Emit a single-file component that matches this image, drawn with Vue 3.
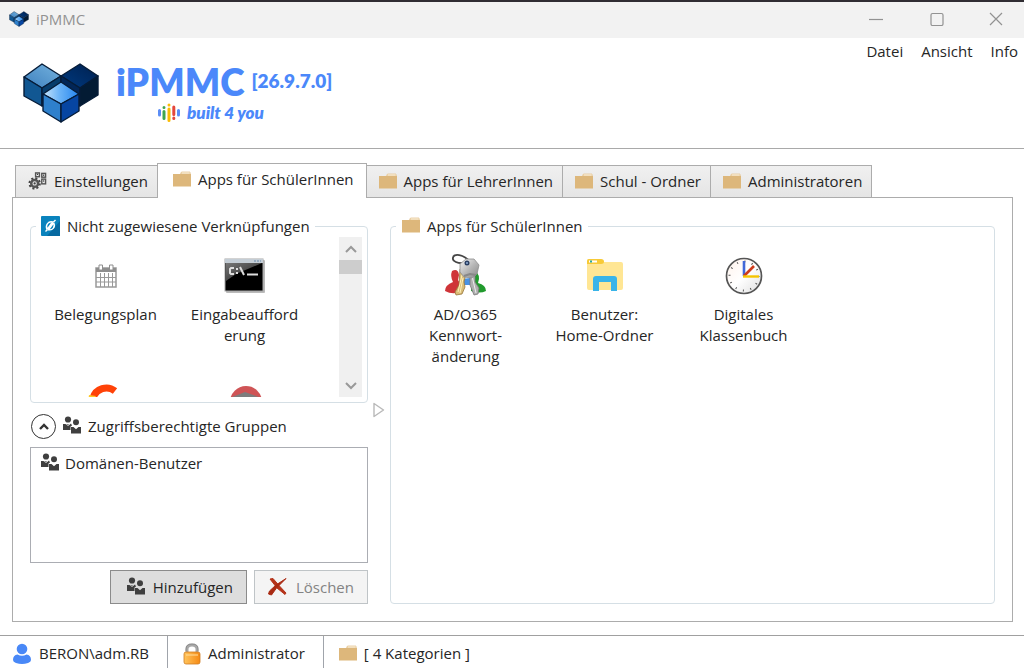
<script setup>
import { ref } from 'vue'

const tabs = [
  { label: 'Einstellungen', icon: 'gear' },
  { label: 'Apps für SchülerInnen', icon: 'folder' },
  { label: 'Apps für LehrerInnen', icon: 'folder' },
  { label: 'Schul - Ordner', icon: 'folder' },
  { label: 'Administratoren', icon: 'folder' }
]
const active = ref(1)
</script>

<template>
  <div class="window">
    <svg class="defs" width="0" height="0" aria-hidden="true">
      <defs>
        <linearGradient id="topLeft" x1="0" y1="1" x2="1" y2="0"><stop offset="0" stop-color="#3d7fbd" /><stop offset="1" stop-color="#75b3df" /></linearGradient>
        <linearGradient id="topRight" x1="0" y1="1" x2="1" y2="0"><stop offset="0" stop-color="#003a80" /><stop offset="1" stop-color="#00204f" /></linearGradient>
        <linearGradient id="topFront" x1="0" y1="0" x2="1" y2="0"><stop offset="0" stop-color="#c8e4fa" /><stop offset="0.45" stop-color="#6cb4f7" /><stop offset="1" stop-color="#2484ee" /></linearGradient>
        <linearGradient id="metal" x1="0" y1="0" x2="1" y2="1"><stop offset="0" stop-color="#f4f4f4" /><stop offset="0.5" stop-color="#b8b8b8" /><stop offset="1" stop-color="#888888" /></linearGradient>
        <linearGradient id="gold" x1="0" y1="0" x2="1" y2="0"><stop offset="0" stop-color="#ffc45c" /><stop offset="1" stop-color="#f68a14" /></linearGradient>
        <linearGradient id="face" x1="0" y1="0" x2="1" y2="1"><stop offset="0" stop-color="#fff3ec" /><stop offset="0.5" stop-color="#ffffff" /><stop offset="1" stop-color="#dedede" /></linearGradient>
        <linearGradient id="shine" x1="0" y1="0" x2="1" y2="1"><stop offset="0" stop-color="#777777" /><stop offset="1" stop-color="#1c1c1c" /></linearGradient>
      </defs>
      <symbol id="cubes" viewBox="0 0 78 62">
        <g stroke="#061c38" stroke-width="1.4" stroke-linejoin="round">
          <path d="M20 2 39 14 20 26 2 15Z" fill="url(#topLeft)" /><path d="M2 15 20 26V44L2 34Z" fill="#115792" /><path d="M20 26 39 14V34L20 44Z" fill="#073c6b" />
          <path d="M58 2 76 14 58 26 39 14Z" fill="url(#topRight)" /><path d="M39 14 58 26V44L39 34Z" fill="#022657" /><path d="M58 26 76 14V33L58 44Z" fill="#031b34" />
          <path d="M39 20 57 32 39 42 21 32Z" fill="url(#topFront)" /><path d="M21 32 39 42V60L21 49Z" fill="#2e80cc" /><path d="M39 42 57 32V49L39 60Z" fill="#0645a2" />
        </g>
      </symbol>
      <symbol id="folder" viewBox="0 0 18 16">
        <path d="M7 4.5 8.5 1H17v4z" fill="#f4e4c8" stroke="#e4c595" stroke-width=".8" />
        <path d="M0 3h7.500L9 2.800H18V15.500H0Z" fill="#ddb77b" />
        <path d="M8 1H17v2H7.500Z" fill="#ead0a5" /><path d="M9 2H16.500" stroke="#fff6e6" stroke-width=".8" />
      </symbol>
      <symbol id="people" viewBox="0 0 18 18">
        <g fill="#3f3f3f"><circle cx="5" cy="3.500" r="3.100" /><circle cx="13" cy="6.200" r="3" />
          <path d="M0 8H2.500L5 10 8 7.500 9 9.500 7.500 10.500V14H0ZM8 11H10.500L13 13.200 15.500 11H18V17.500H8Z" /></g>
        <path d="M3 8H6L5 10Z" fill="#888" />
      </symbol>
      <symbol id="gear" viewBox="0 0 20 20">
        <circle cx="7" cy="12.500" r="3.600" fill="none" stroke="#555" stroke-width="2.600" />
        <circle cx="7" cy="12.500" r="5.500" fill="none" stroke="#444" stroke-width="2" stroke-dasharray="2.200 2.120" />
        <circle cx="7" cy="12.500" r="1.200" fill="#444" />
        <g fill="none" stroke="#555" stroke-width="1.500"><rect x="8" y="1.500" width="4" height="4" /><rect x="14.500" y="2" width="4" height="4" /><rect x="14.500" y="8" width="4" height="5" /></g>
        <path d="M9.500 3h1M16 4h1M16 10h1" stroke="#333" stroke-width="1.500" />
      </symbol>
    </svg>

    <header class="titlebar">
      <svg class="mini"><use href="#cubes" /></svg>
      <span class="caption">iPMMC</span>
      <button class="win" aria-label="Minimieren"><svg width="14" height="14"><path d="M0 7.500H14" /></svg></button>
      <button class="win" aria-label="Maximieren"><svg width="14" height="14"><rect x="1" y="1.500" width="12" height="12" rx="1.500" /></svg></button>
      <button class="win" aria-label="Schließen"><svg width="14" height="14"><path d="M1 1 13 13M13 1 1 13" /></svg></button>
    </header>

    <section class="banner">
      <svg class="logo"><use href="#cubes" /></svg>
      <div class="brand">
        <div class="name"><h1>iPMMC</h1><span class="version">[26.9.7.0]</span></div>
        <div class="slogan">
          <svg width="22" height="20" viewBox="0 0 22 20" fill="none" stroke-width="3" stroke-linecap="round">
            <path d="M1.500 7.500V12M20.500 7.500V12" stroke="#5b8df6" /><path d="M6 8.500V15.500M6 4.500V4.600" stroke="#3fa650" />
            <path d="M11 6V17.500M11 2V2.100" stroke="#fbbc05" /><path d="M15.800 4V11.500M15.800 15V15.400" stroke="#e5473b" />
          </svg>
          <span>built 4 you</span>
        </div>
      </div>
      <nav class="menu"><button>Datei</button><button>Ansicht</button><button>Info</button></nav>
    </section>

    <main class="main">
      <div class="tabs" role="tablist">
        <button v-for="(t, i) in tabs" :key="t.label" role="tab" :aria-selected="i === active" :class="['tab', { on: i === active }]" @click="active = i">
          <svg :class="t.icon"><use :href="'#' + t.icon" /></svg>{{ t.label }}
        </button>
      </div>
      <div class="panel" role="tabpanel">
        <div class="left">
          <fieldset class="group">
            <legend>
              <svg width="19" height="20" viewBox="0 0 19 20"><rect width="19" height="20" rx="1" fill="#0a83bd" /><path d="M19 5V20H6Z" fill="#0669a0" />
                <g fill="none" stroke="#fff" stroke-width="1.400"><path d="M4.500 15.500 6.500 13.500M6 13.500C4 9 7.500 5 11.500 6L6.500 13M12.500 6.500C15 11 11.500 14.500 7.500 13.800L12.500 7M12.500 6 14.500 4" /></g></svg>
              Nicht zugewiesene Verknüpfungen
            </legend>
            <div class="scroller">
              <div class="items">
                <button class="item">
                  <span class="pic"><svg width="22" height="24" viewBox="0 0 22 24"><path d="M1 4H21V23H1Z" fill="#fff" stroke="#999" stroke-width="1.500" /><path d="M1 4H21V8H1Z" fill="#8e8e8e" /><path d="M1 13.500H21M1 18H21M5.500 9V23M9.500 9V23M13.500 9V23M17.500 9V23" stroke="#999" /><path d="M4 1H7.500V6H4ZM14.500 1H18V6H14.500Z" fill="#fff" stroke="#8e8e8e" /></svg></span>
                  <span>Belegungsplan</span>
                </button>
                <button class="item">
                  <span class="pic"><svg width="42" height="36" viewBox="0 0 42 36"><rect x="2" y="2" width="39" height="33" rx="1" fill="#bbb" /><rect x="1" y="1" width="38" height="32" fill="#000" stroke="#a8a8a8" /><path d="M2 5H38L12 16 2 23Z" fill="url(#shine)" /><path d="M1 1H39V5H1Z" fill="#c4cdd5" /><path d="M30 3H37" stroke="#6889aa" stroke-dasharray="2 1" />
                    <g fill="none" stroke="#ddd" stroke-width="2"><path d="M10 10H7L6 11V15L7 16H10M13 10V12M13 14V16M16 9 20 17M23 16.500H34" /></g></svg></span>
                  <span>Eingabeaufford<br>erung</span>
                </button>
                <button class="item" aria-label="Verknüpfung 3">
                  <span class="pic"><svg width="36" height="36" viewBox="0 0 36 36"><path d="M5 14A14 14 0 0 1 27 7" fill="none" stroke="#ff4208" stroke-width="7" /><path d="M1 11 8 12 5 17H0Z" fill="#ffc928" /></svg></span>
                </button>
                <button class="item" aria-label="Verknüpfung 4">
                  <span class="pic"><svg width="36" height="36" viewBox="0 0 36 36"><circle cx="19" cy="18" r="16" fill="#cf5456" /><path d="M0 15 18 8 37 15Z" fill="#7d7d7d" /></svg></span>
                </button>
              </div>
              <div class="bar">
                <button aria-label="Nach oben"><svg width="12" height="8"><path d="M1 7 6 2 11 7" /></svg></button>
                <span class="thumb"></span>
                <button class="down" aria-label="Nach unten"><svg width="12" height="8"><path d="M1 1 6 6 11 1" /></svg></button>
              </div>
            </div>
          </fieldset>
          <div class="expander">
            <button class="round" aria-label="Einklappen"><svg width="12" height="8"><path d="M2 6 6 2 10 6" /></svg></button>
            <svg class="people"><use href="#people" /></svg>
            <span>Zugriffsberechtigte Gruppen</span>
          </div>
          <ul class="list">
            <li><svg class="people"><use href="#people" /></svg>Domänen-Benutzer</li>
          </ul>
          <div class="actions">
            <button class="action"><svg class="people"><use href="#people" /></svg>Hinzufügen</button>
            <button class="action off" disabled>
              <svg width="20" height="18" viewBox="0 0 20 18"><path d="M2 1 5 .5 11 7.500 18 15 17 16.500 9 10Z" fill="#b5341b" stroke="#b5341b" /><path d="M18 .5 8.500 10 3.500 17 .5 16 1.500 13 8 7Z" fill="#a92a13" stroke="#a92a13" /></svg>Löschen
            </button>
          </div>
        </div>
        <div class="splitter"><svg width="12" height="16"><path d="M1 1.500V14.500L10.500 8Z" fill="#fff" stroke="#b9b9b9" stroke-width="1.400" stroke-linejoin="round" /></svg></div>
        <fieldset class="group right">
          <legend><svg class="folder"><use href="#folder" /></svg>Apps für SchülerInnen</legend>
          <div class="items">
            <button class="item">
              <span class="pic"><svg width="44" height="44" viewBox="0 0 44 44">
                <path d="M8 17Q14 14 15 21L14 26 17 31V38Q8 41 1 37 1 31 9 28 6 22 8 17Z" fill="#cf3438" />
                <path d="M28 17Q35 17 35 25L34 29Q42 31 42 37 36 40 27 37Z" fill="#219a2d" />
                <path d="M18 25 26 24 29 31 17 31Z" fill="#4992e4" />
                <path d="M26 8C20 0 9-1 9 4 8 7 14 10 20 9" fill="none" stroke="#454545" stroke-width="1.800" />
                <path d="M16 15 22 19 20 28 21 33 18 40 12 41 11 38 15 31Z" fill="#d9bd78" stroke="#98763b" stroke-width=".8" /><path d="M18 21 14 38M19 24 16 39" stroke="#fff0b9" />
                <path d="M26 20 31 21 31 28 35 34 34 40 30 41 26 31Z" fill="#b0b0b0" stroke="#777" stroke-width=".8" /><path d="M28 22 32 39" stroke="#eee" />
                <path d="M16 10 22 5 30 5 35 11 33 20 28 24 20 23 16 18Z" fill="url(#metal)" stroke="#8d8d8d" stroke-width=".8" /><path d="M20 22 26 20 32 21" fill="none" stroke="#888" stroke-width="2" />
                <circle cx="23" cy="9" r="2.500" fill="#293e62" /><circle cx="23" cy="9" r="1" fill="#8faed5" /></svg></span>
              <span>AD/O365<br>Kennwort-<br>änderung</span>
            </button>
            <button class="item">
              <span class="pic"><svg width="38" height="34" viewBox="0 0 38 34"><path d="M1 2Q1 0 3 0H15L18 3H35Q37 3 37 5V29Q37 31 35 31H3Q1 31 1 29Z" fill="#ffe694" /><path d="M1 5V2Q1 0 3 0H15Q18 0 18 2.500T15 5Z" fill="#f7ca37" /><rect x="3" y="1.500" width="8" height="2" fill="#fff" /><rect x="4" y="1.500" width="2" height="2" fill="#27a8a0" /><path d="M7 32V20Q7 17 10 17H28Q31 17 31 20V32H25V23H13V32Z" fill="#39b4e8" /></svg></span>
              <span>Benutzer:<br>Home-Ordner</span>
            </button>
            <button class="item">
              <span class="pic"><svg width="38" height="38" viewBox="0 0 38 38"><circle cx="19" cy="19" r="17.500" fill="url(#face)" stroke="#555" stroke-width="1.700" /><circle cx="19" cy="19" r="14.500" fill="none" stroke="#555" stroke-width="2" stroke-dasharray="1 6.592" /><path d="M19 19V4" stroke="#4268d8" stroke-width="2.600" /><path d="M19 19 29 9" stroke="#cf3c1b" stroke-width="2.600" /><path d="M18 19.500H34" stroke="#f5c400" stroke-width="2.400" /></svg></span>
              <span>Digitales<br>Klassenbuch</span>
            </button>
          </div>
        </fieldset>
      </div>
    </main>

    <footer class="status">
      <div class="cell user"><svg width="18" height="22" viewBox="0 0 18 22" fill="#4988f7"><circle cx="9" cy="6" r="5.300" /><path d="M0 17Q0 12 4.500 11.500 9 14 13.500 11.500 18 12 18 17 18 19 15 20 9 22 3 20 0 19 0 17Z" /></svg>BERON\adm.RB</div>
      <div class="cell"><svg width="18" height="22" viewBox="0 0 18 22"><path d="M4 10V6Q4 2 9 2T14 6V10" fill="none" stroke="#a8a8a8" stroke-width="3" /><path d="M3 8V6Q3 1 9 1T15 6V8" fill="none" stroke="#777" stroke-width=".6" /><rect x="1" y="9" width="16" height="12" rx="2" fill="url(#gold)" stroke="#cf7c21" stroke-width=".8" /><path d="M3 12H15" stroke="#ffe0a1" /></svg>Administrator</div>
      <div class="cell cats"><svg class="folder"><use href="#folder" /></svg>[ 4 Kategorien ]</div>
    </footer>
  </div>
</template>

<style>
body { margin: 0; }
</style>

<style scoped>
* { box-sizing: border-box; }
.window { display: flex; flex-direction: column; min-height: 100vh; background: #fff; color: #262626; font: 15px/21px "Open Sans", "Noto Sans", sans-serif; }
.defs { position: absolute; }
svg { flex: none; display: block; }
button { font: inherit; color: inherit; border: 0; padding: 0; background: none; }
.titlebar { display: flex; align-items: center; height: 38px; padding: 0 0 2px 9px; border-top: 2px solid #302d33; background: #f2f2f2; color: #929292; }
.mini { width: 20px; height: 16px; }
.caption { flex: 1; margin-left: 7px; }
.win { width: 61px; height: 34px; display: flex; align-items: center; justify-content: center; }
.win:last-child { width: 57px; }
.win svg { fill: none; stroke: #929292; stroke-width: 1.2; }
.banner { display: flex; align-items: flex-start; height: 111px; padding-left: 22px; border-bottom: 1px solid #a9a9a9; }
.logo { width: 78px; height: 62px; margin-top: 24px; }
.brand { flex: 1; margin: 21px 0 0 16px; color: #4b88fa; font-family: Lato, sans-serif; font-weight: 800; }
.name { display: flex; gap: 7px; }
h1 { margin: 0; font-size: 37px; line-height: 46px; font-weight: inherit; }
.version { font-size: 19px; line-height: 44px; }
.slogan { display: flex; align-items: center; gap: 7px; margin: -2px 0 0 42px; font-size: 17px; line-height: 20px; font-style: italic; }
.menu { display: flex; gap: 18px; margin: 3px 6px 0 0; }
.main { flex: 1; display: flex; flex-direction: column; padding: 14px 11px 13px 12px; }
.tabs { display: flex; align-items: flex-end; padding-left: 3px; }
.tab { display: flex; align-items: center; gap: 7px; height: 32px; padding: 0 9px 0 12px; margin-right: -1px; border: 1px solid #acacac; border-bottom: 0; background: linear-gradient(#f0f0f0, #e5e5e5); white-space: nowrap; }
.tab.on { position: relative; height: 35px; margin-bottom: -1px; padding: 0 12px 3px 15px; background: #fff; }
.gear { width: 19px; height: 20px; margin-bottom: 2px; }
.folder { width: 18px; height: 16px; margin-bottom: 2px; }
.people { width: 18px; height: 18px; margin-bottom: 3px; }
.panel { flex: 1; display: flex; padding: 17px; border: 1px solid #acacac; }
.left { width: 338px; display: flex; flex-direction: column; }
.group { margin: 0; min-width: 0; padding: 0 5px 5px; border: 1px solid #d5dfe5; border-radius: 4px; }
legend { display: flex; align-items: center; gap: 7px; height: 22px; padding: 0 5px; }
.scroller { display: flex; height: 160px; overflow: hidden; }
.items { flex: 1; display: flex; flex-wrap: wrap; align-content: flex-start; padding-top: 21px; }
.item { width: 139px; min-height: 126px; display: flex; flex-direction: column; align-items: center; justify-content: flex-start; }
.pic { display: flex; align-items: center; justify-content: center; height: 36px; margin-bottom: 10px; }
.bar { width: 23px; display: flex; flex-direction: column; background: #f0f0f0; }
.bar button { height: 23px; display: flex; align-items: center; justify-content: center; }
.bar .down { margin-top: auto; }
.bar svg { fill: none; stroke: #999; stroke-width: 2; }
.thumb { height: 14px; background: #cdcdcd; }
.expander { display: flex; align-items: center; height: 44px; gap: 7px; padding: 3px 0 0 1px; }
.round { width: 25px; height: 25px; display: flex; align-items: center; justify-content: center; border: 1px solid #333; border-radius: 50%; background: #fff; }
.round svg { fill: none; stroke: #333; stroke-width: 2.4; }
.list { flex: 1; margin: 0; padding: 5px 10px; border: 1px solid #abadb3; list-style: none; }
.list li { display: flex; align-items: center; gap: 6px; }
.actions { display: flex; justify-content: flex-end; gap: 7px; margin-top: 7px; }
.action { display: flex; align-items: center; justify-content: center; gap: 8px; height: 34px; padding: 0 13px 0 16px; border: 1px solid #8b8b8b; background: #ddd; }
.off { padding-left: 13px; border-color: #bfc4c7; background: #f4f4f4; color: #838383; }
.splitter { width: 22px; display: flex; align-items: center; justify-content: center; }
.right { flex: 1; }
.right legend { padding-left: 6px; }
.status { display: flex; height: 33px; border-top: 1px solid #a0a0a0; }
.cell { display: flex; align-items: center; gap: 7px; padding: 3px 18px 0 15px; border-right: 1px solid #a0a4ab; }
.user { gap: 8px; padding-left: 13px; }
.cats { border-right: 0; }
</style>
